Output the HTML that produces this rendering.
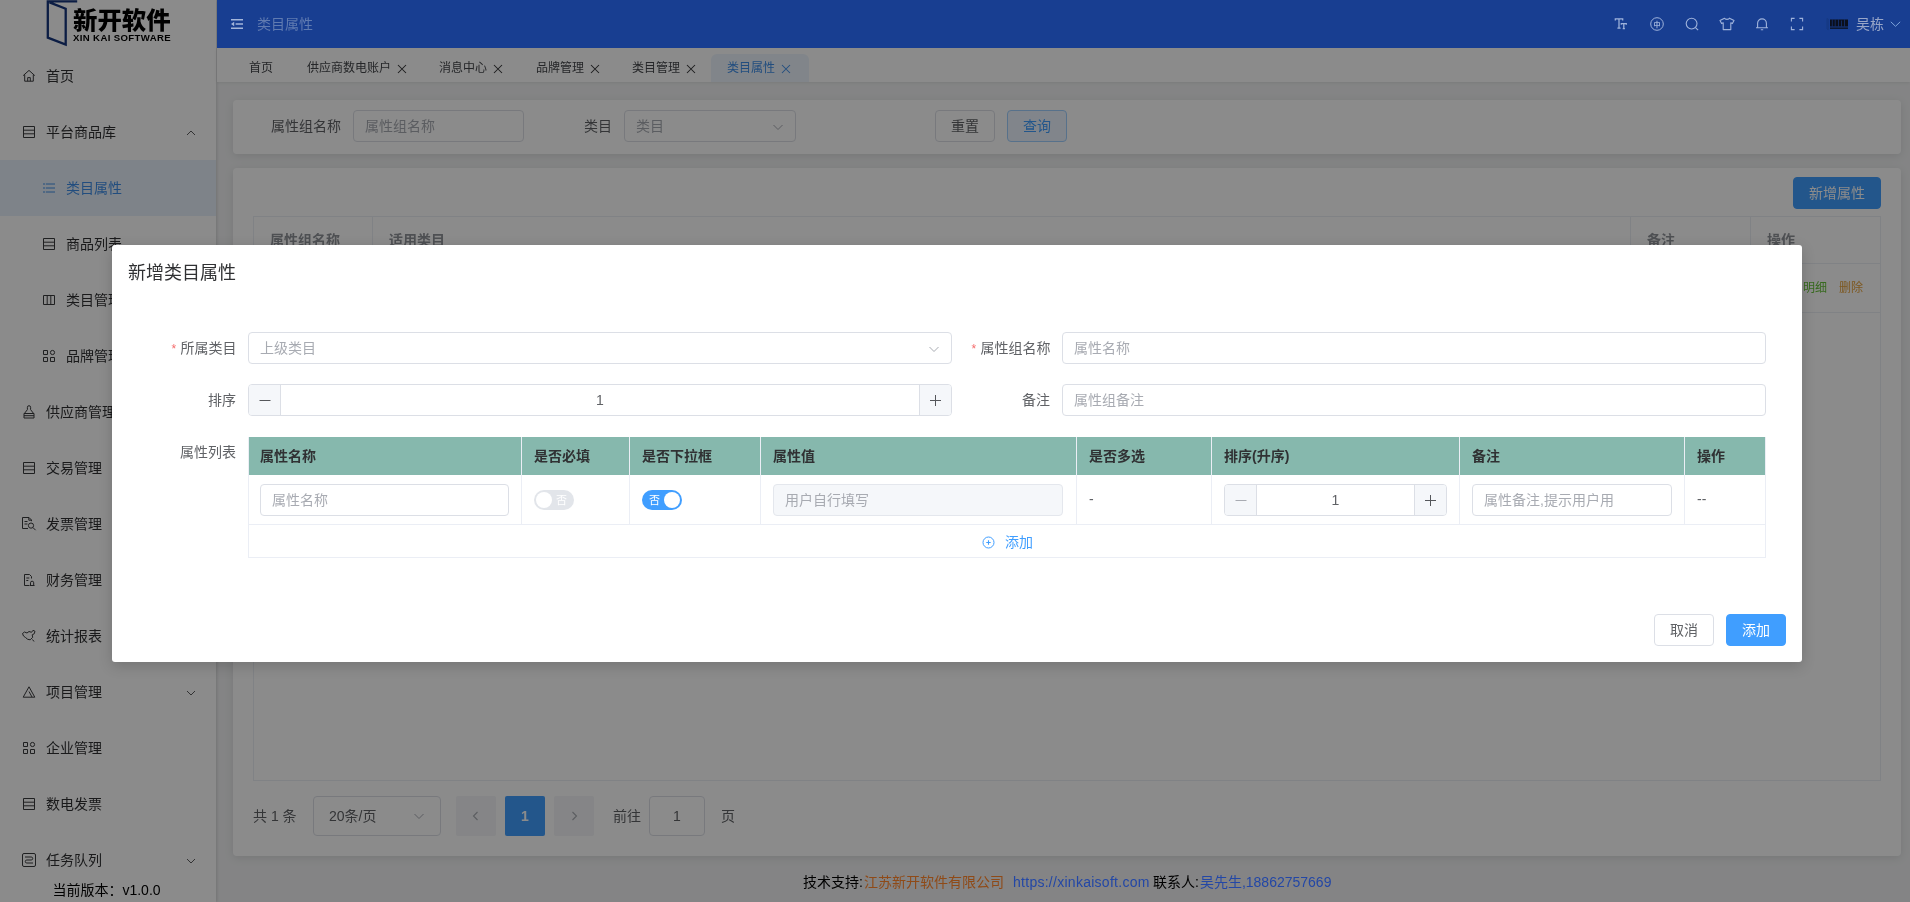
<!DOCTYPE html>
<html lang="zh-CN">
<head>
<meta charset="utf-8">
<title>类目属性</title>
<style>
*{box-sizing:border-box;margin:0;padding:0}
html,body{width:1910px;height:902px;overflow:hidden}
body{position:relative;background:#f2f3f4;font-family:"Liberation Sans","Noto Sans CJK SC",sans-serif;font-size:14px;color:#303133}
.abs{position:absolute}
svg{display:block}
#side,#hd,#tabs,.card,#ft,#md{will-change:transform}
/* ---------- sidebar ---------- */
#side{position:absolute;left:0;top:0;width:216px;height:902px;background:#fff;box-shadow:1px 0 3px rgba(0,0,0,.14)}
.mi{position:absolute;left:0;width:216px;height:56px;line-height:56px;font-size:14px;color:#303133;white-space:nowrap}
.mi .ic{position:absolute;left:22px;top:21px;width:14px;height:14px}
.mi .tx{position:absolute;left:46px;top:0}
.mi.sub .ic{left:42px}
.mi.sub .tx{left:66px}
.mi .ar{position:absolute;left:185px;top:23px;width:12px;height:12px}
.mi.act{background:#e8f1fb;color:#3f8ee8}
/* ---------- header ---------- */
#hd{position:absolute;left:217px;top:0;width:1693px;height:48px;background:#183e91;z-index:4}
#hd .ttl{position:absolute;left:40px;top:0;line-height:48px;font-size:14px;color:#607bb1}
.hic{position:absolute;top:17px;width:14px;height:14px}
/* ---------- tabs ---------- */
#tabs{position:absolute;left:217px;top:48px;width:1693px;height:34px;background:#fff;box-shadow:0 1px 3px rgba(0,0,0,.08)}
.tab{position:absolute;top:6px;height:28px;line-height:29px;font-size:12px;color:#45474b;white-space:nowrap}
.tab .x{position:absolute;top:9.500px;width:10px;height:10px}
.tab.on{background:#ecf4fd;color:#3f8ee8;border-radius:6px 6px 0 0}
/* ---------- cards ---------- */
.card{position:absolute;background:#fff;border-radius:4px;box-shadow:0 2px 10px rgba(0,0,0,.10)}
.inp{position:absolute;height:32px;border:1px solid #dcdfe6;border-radius:4px;background:#fff;font-size:14px;line-height:30px;color:#a8abb2;padding-left:11px;white-space:nowrap;overflow:hidden}
.lbl{position:absolute;height:32px;line-height:32px;font-size:14px;color:#606266;white-space:nowrap}
.btn{position:absolute;height:32px;line-height:30px;border:1px solid #dcdfe6;border-radius:4px;background:#fff;color:#606266;font-size:14px;text-align:center;white-space:nowrap}
.btn.pri{background:#409eff;border-color:#409eff;color:#fff}
.btn.pln{background:#ecf5ff;border-color:#a0cfff;color:#409eff}
/* back table */
#bt{position:absolute;left:20px;top:48px;width:1628px;height:565px;border:1px solid #ebeef5}
#bt .th{position:absolute;top:0;height:47px;line-height:47px;padding-left:16px;font-weight:bold;color:#909399;font-size:14px;border-right:1px solid #ebeef5;border-bottom:1px solid #ebeef5}
#bt .td{position:absolute;top:47px;height:49px;line-height:48px;border-bottom:1px solid #ebeef5;border-right:1px solid #ebeef5}
/* pagination */
.pg{position:absolute;top:628px;height:40px;line-height:40px;font-size:14px;color:#606266;white-space:nowrap}
/* ---------- overlay + modal ---------- */
#ov{z-index:3;position:absolute;left:0;top:0;width:1910px;height:902px;background:rgba(0,0,0,.455)}
#md{z-index:6;position:absolute;left:112px;top:245px;width:1690px;height:417px;background:#fff;border-radius:3px;box-shadow:0 4px 14px rgba(0,0,0,.17)}
#md .mt{position:absolute;left:16px;top:16px;font-size:18px;line-height:24px;color:#303133}
.num{position:absolute;height:32px;border:1px solid #dcdfe6;border-radius:4px;background:#fff;overflow:hidden}
.num .m,.num .p{position:absolute;top:0;width:32px;height:30px;background:#f5f7fa;color:#55575b}
.num .m{left:0;border-right:1px solid #dcdfe6}
.num .p{right:0;border-left:1px solid #dcdfe6}
.num .v{position:absolute;left:32px;right:32px;top:0;height:30px;line-height:30px;text-align:center;font-size:14px;color:#606266}
.num svg{position:absolute;left:10px;top:10px;width:12px;height:12px}
/* modal table */
#mtb{position:absolute;left:136px;top:192px;width:1518px;height:121px;border-bottom:1px solid #ebeef5;border-right:1px solid #ebeef5}
#mtb .h{position:absolute;top:0;height:38px;line-height:38px;background:#86b8ad;color:#303133;font-weight:bold;font-size:14px;padding-left:12px;border-right:1px solid #ebeef5;white-space:nowrap}
#mtb .c{position:absolute;top:38px;height:50px;border-right:1px solid #ebeef5;border-bottom:1px solid #ebeef5;line-height:49px;padding-left:12px;color:#606266}
.sw{position:absolute;top:15px;width:40px;height:20px;border-radius:10px}
.sw i{position:absolute;top:2px;width:16px;height:16px;border-radius:8px;background:#fff}
.sw b{position:absolute;top:0;line-height:20px;font-size:11px;color:#fff;font-weight:normal}
</style>
</head>
<body>

<!-- ================= SIDEBAR ================= -->
<div id="side">
  <!-- logo -->
  <svg class="abs" style="left:44px;top:0" width="36" height="48" viewBox="0 0 36 48"><path d="M33.200 1.300H3.800V37.600L21.700 44.600V8.700L5.500 2.400" fill="none" stroke="#16367d" stroke-width="2.300"/></svg>
  <div class="abs" style="left:73px;top:7px;font-size:24.400px;line-height:28px;font-weight:900;color:#000;white-space:nowrap;letter-spacing:0">新开软件</div>
  <div class="abs" style="left:73px;top:32px;font-size:9.600px;line-height:12px;font-weight:bold;color:#000;white-space:nowrap;letter-spacing:.36px">XIN KAI SOFTWARE</div>

  <div class="mi" style="top:48px"><svg class="ic" viewBox="0 0 14 14"><path d="M1.2 6.6L7 1.4l5.8 5.2M2.7 5.6v6.6h8.6V5.6M5.7 12.2V8.6h2.6v3.6" fill="none" stroke="#3a3b3d" stroke-width="1"/></svg><span class="tx">首页</span></div>
  <div class="mi" style="top:104px"><svg class="ic" viewBox="0 0 14 14"><path d="M1.500 1.500h11v11h-11zM1.500 5.200h11M1.500 8.800h11" fill="none" stroke="#3a3b3d" stroke-width="1"/></svg><span class="tx">平台商品库</span><svg class="ar" viewBox="0 0 12 12"><path d="M2 8l4-4 4 4" fill="none" stroke="#4a4b4d" stroke-width=".9"/></svg></div>
  <div class="mi sub act" style="top:160px"><svg class="ic" viewBox="0 0 14 14"><path d="M1 3h12M1 7h12M1 11h12" fill="none" stroke="#3f8ee8" stroke-width="1" stroke-dasharray="2 .8 20"/></svg><span class="tx">类目属性</span></div>
  <div class="mi sub" style="top:216px"><svg class="ic" viewBox="0 0 14 14"><path d="M1.500 1.500h11v11h-11zM1.500 5.200h11M1.500 8.800h11" fill="none" stroke="#3a3b3d" stroke-width="1"/></svg><span class="tx">商品列表</span></div>
  <div class="mi sub" style="top:272px"><svg class="ic" viewBox="0 0 14 14"><path d="M1.5 2.5h11v9h-11zM5.2 2.5v9M8.8 2.5v9" fill="none" stroke="#3a3b3d" stroke-width="1"/></svg><span class="tx">类目管理</span></div>
  <div class="mi sub" style="top:328px"><svg class="ic" viewBox="0 0 14 14"><path d="M1.5 1.5h4v4h-4zM1.5 8.5h4v4h-4zM8.5 8.5h4v4h-4z" fill="none" stroke="#3a3b3d" stroke-width="1"/><circle cx="10.5" cy="3.5" r="2.1" fill="none" stroke="#3a3b3d" stroke-width="1"/></svg><span class="tx">品牌管理</span></div>
  <div class="mi" style="top:384px"><svg class="ic" viewBox="0 0 14 14"><path d="M5.400 4.600V2.300a1.600 1.600 0 013.200 0v2.300l3 3.900H2.400zM2 8.500h10v4.500H2zM2 10.700h10" fill="none" stroke="#3a3b3d" stroke-width="1" stroke-linejoin="round"/></svg><span class="tx">供应商管理</span></div>
  <div class="mi" style="top:440px"><svg class="ic" viewBox="0 0 14 14"><path d="M1.500 1.500h11v11h-11zM1.500 5.200h11M1.500 8.800h11" fill="none" stroke="#3a3b3d" stroke-width="1"/></svg><span class="tx">交易管理</span></div>
  <div class="mi" style="top:496px"><svg class="ic" style="left:21px;top:20px;width:16px;height:16px" viewBox="0 0 16 16"><path d="M10.500 5.200V4L8 1.500H1.500v11H7M7.800 1.700v2.500h2.500M3.500 5.500h3M3.500 8h3" fill="none" stroke="#3a3b3d" stroke-width="1"/><circle cx="10" cy="9.600" r="2.600" fill="none" stroke="#3a3b3d" stroke-width="1"/><path d="M12 11.600l2.600 2.600" stroke="#3a3b3d" stroke-width="1"/></svg><span class="tx">发票管理</span></div>
  <div class="mi" style="top:552px"><svg class="ic" viewBox="0 0 14 14"><path d="M9.500 5.500V3.500L7.500 1.500H2.500v11h4.500M4.300 5h3M4.300 7.500h2" fill="none" stroke="#3a3b3d" stroke-width="1"/><path d="M7.500 12.500h5M8.500 12.500v-2.700a1.600 1.600 0 013.200 0v2.700" fill="none" stroke="#3a3b3d" stroke-width="1"/></svg><span class="tx">财务管理</span></div>
  <div class="mi" style="top:608px"><svg class="ic" style="left:21px;top:20px;width:16px;height:16px" viewBox="0 0 16 16"><path d="M1.500 5.500l2-1.500 2.500 1 2-1.500 2.500.8 1.500-2 2 1-.8 2.500-2 1 .5 2.500-2.500 2.500-2.500-.5L4.500 9.500 2.500 8z" fill="none" stroke="#3a3b3d" stroke-width="1" stroke-linejoin="round"/><path d="M11.500 11.500l1.500 2" stroke="#3a3b3d" stroke-width="1"/></svg><span class="tx">统计报表</span></div>
  <div class="mi" style="top:664px"><svg class="ic" viewBox="0 0 14 14"><path d="M7 1.800L12.800 12.200H1.200zM7 6.500l3 5.500" fill="none" stroke="#3a3b3d" stroke-width="1" stroke-linejoin="round"/></svg><span class="tx">项目管理</span><svg class="ar" viewBox="0 0 12 12"><path d="M2 4l4 4 4-4" fill="none" stroke="#4a4b4d" stroke-width=".9"/></svg></div>
  <div class="mi" style="top:720px"><svg class="ic" viewBox="0 0 14 14"><path d="M1.500 1.500h4v4h-4zM1.500 8.500h4v4h-4zM8.500 8.500h4v4h-4z" fill="none" stroke="#3a3b3d" stroke-width="1"/><circle cx="10.500" cy="3.500" r="2.100" fill="none" stroke="#3a3b3d" stroke-width="1"/></svg><span class="tx">企业管理</span></div>
  <div class="mi" style="top:776px"><svg class="ic" viewBox="0 0 14 14"><path d="M1.500 1.500h11v11h-11zM1.500 5.200h11M1.500 8.800h11" fill="none" stroke="#3a3b3d" stroke-width="1"/></svg><span class="tx">数电发票</span></div>
  <div class="mi" style="top:832px"><svg class="ic" style="left:21px;top:20px;width:16px;height:16px" viewBox="0 0 16 16"><rect x="1.500" y="1.500" width="13" height="13" rx="1.500" fill="none" stroke="#3a3b3d" stroke-width="1"/><path d="M4 5h6.200a1.500 1.500 0 010 3H5.800a1.500 1.500 0 000 3H12" fill="none" stroke="#3a3b3d" stroke-width="1"/></svg><span class="tx">任务队列</span><svg class="ar" viewBox="0 0 12 12"><path d="M2 4l4 4 4-4" fill="none" stroke="#4a4b4d" stroke-width=".9"/></svg></div>
  <div class="abs" style="left:0;top:878px;width:216px;height:24px;line-height:24px;background:#fff;text-align:center;font-size:14px;color:#000;padding-right:3px">当前版本：v1.0.0</div>
</div>

<!-- ================= HEADER ================= -->
<div id="hd">
  <svg class="abs" style="left:14px;top:19px" width="12" height="10" viewBox="0 0 12 10"><path d="M0 .8h12M4.600 5h7.400M0 9.200h12" stroke="#a3b5da" stroke-width="1.500" fill="none"/><path d="M0 5l3.200-2.300v4.600z" fill="#a3b5da"/></svg>
  <div class="ttl">类目属性</div>
<div style="opacity:1">
  <!-- Tt -->
  <svg class="hic" style="left:1397px" viewBox="0 0 14 14"><path d="M1.300 3.600V1.800h7.400v1.800M5 1.800v9.400M3.400 11.200h3.200M7.300 7.800V6.600h5v1.200M9.800 6.600v5M8.700 11.600h2.200" fill="none" stroke="#9fb3db" stroke-width="1.250"/></svg>
  <!-- zh circle -->
  <svg class="hic" style="left:1433px" viewBox="0 0 14 14"><circle cx="7" cy="7" r="6.300" fill="none" stroke="#9fb3db" stroke-width="1"/><text x="7" y="9.600" font-size="7" font-weight="bold" text-anchor="middle" fill="#9fb3db" font-family="Noto Sans CJK SC,sans-serif">中</text></svg>
  <!-- search -->
  <svg class="hic" style="left:1468px" viewBox="0 0 14 14"><circle cx="6.600" cy="6.600" r="5.400" fill="none" stroke="#9fb3db" stroke-width="1.100"/><path d="M10.500 10.700l2.600 2.500" stroke="#9fb3db" stroke-width="1.100"/></svg>
  <!-- shirt -->
  <svg class="hic" style="left:1502px;width:16px" viewBox="0 0 16 14"><path d="M5.500 1.200L1 3.600l1.600 3 1.600-.8v6.800h7.600V5.800l1.600.8 1.600-3-4.500-2.400c-.5 1.500-4.500 1.500-5 0z" fill="none" stroke="#9fb3db" stroke-width="1.100" stroke-linejoin="round"/></svg>
  <!-- bell -->
  <svg class="hic" style="left:1538px" viewBox="0 0 14 14"><path d="M2.600 10.800V6.300a4.400 4.400 0 018.800 0v4.500M1 10.800h12M5.800 12.800h2.400" fill="none" stroke="#9fb3db" stroke-width="1.100"/></svg>
  <!-- fullscreen -->
  <svg class="hic" style="left:1573px" viewBox="0 0 14 14"><path d="M1.400 4.600V1.400h3.200M9.400 1.400h3.200v3.200M12.600 9.400v3.200H9.400M4.600 12.600H1.400V9.400" fill="none" stroke="#9fb3db" stroke-width="1.100"/></svg>
  <!-- avatar -->
  <svg class="abs" style="left:1609px;top:17px" width="23" height="14" viewBox="0 0 23 14"><path d="M1 1.500v10.500l1.300.8V2.300z" fill="none" stroke="#16367d" stroke-width=".7"/><rect x="4" y="2.500" width="18" height="7" fill="#0b0f1c"/><path d="M6.300 2.500v7M9.200 2.500v7M12.500 2.500v7M15.500 3.500v6M18.500 2.500v7" stroke="#183e91" stroke-width=".6"/><rect x="4" y="10.500" width="18" height="1.300" fill="#0b0f1c"/></svg>
  <div class="abs" style="left:1639px;top:0;line-height:48px;font-size:14px;color:#98a6c8;white-space:nowrap">吴栋</div>
  <svg class="abs" style="left:1673px;top:19px" width="11" height="10" viewBox="0 0 11 10"><path d="M.800 2.800L5.500 7.300l4.700-4.500" fill="none" stroke="#7da3da" stroke-width="1"/></svg>
</div>
</div>

<!-- ================= TABS ================= -->
<div id="tabs"><div class="tab" style="left:16px;width:56px;padding-left:16px">首页</div><div class="tab" style="left:74px;width:134px;padding-left:16px">供应商数电账户<svg class="x" style="left:106px" viewBox="0 0 10 10"><path d="M1 1l8 8M9 1l-8 8" stroke="#303133" stroke-width="1.050" fill="none"/></svg></div><div class="tab" style="left:206px;width:98px;padding-left:16px">消息中心<svg class="x" style="left:70px" viewBox="0 0 10 10"><path d="M1 1l8 8M9 1l-8 8" stroke="#303133" stroke-width="1.050" fill="none"/></svg></div><div class="tab" style="left:303px;width:98px;padding-left:16px">品牌管理<svg class="x" style="left:70px" viewBox="0 0 10 10"><path d="M1 1l8 8M9 1l-8 8" stroke="#303133" stroke-width="1.050" fill="none"/></svg></div><div class="tab" style="left:399px;width:98px;padding-left:16px">类目管理<svg class="x" style="left:70px" viewBox="0 0 10 10"><path d="M1 1l8 8M9 1l-8 8" stroke="#303133" stroke-width="1.050" fill="none"/></svg></div><div class="tab on" style="left:494px;width:98px;padding-left:16px">类目属性<svg class="x" style="left:70px" viewBox="0 0 10 10"><path d="M1 1l8 8M9 1l-8 8" stroke="#3f8ee8" stroke-width="1.050" fill="none"/></svg></div></div>

<!-- ================= SEARCH CARD ================= -->
<div class="card" id="sc" style="left:233px;top:100px;width:1668px;height:54px">
  <div class="lbl" style="left:38px;top:10px">属性组名称</div>
  <div class="inp" style="left:120px;top:10px;width:171px">属性组名称</div>
  <div class="lbl" style="left:351px;top:10px">类目</div>
  <div class="inp" style="left:391px;top:10px;width:172px">类目<svg class="abs" style="left:147px;top:10px" width="12" height="12" viewBox="0 0 12 12"><path d="M1.500 4l4.500 4.500L10.500 4" fill="none" stroke="#a8abb2" stroke-width="1"/></svg></div>
  <div class="btn" style="left:702px;top:10px;width:60px">重置</div>
  <div class="btn pln" style="left:774px;top:10px;width:60px">查询</div>
</div>

<!-- ================= MAIN CARD ================= -->
<div class="card" id="mc" style="left:233px;top:168px;width:1668px;height:688px">
  <div class="btn pri" style="left:1560px;top:9px;width:88px">新增属性</div>
  <div id="bt">
    <div class="th" style="left:0;width:119px">属性组名称</div>
    <div class="th" style="left:119px;width:1258px">适用类目</div>
    <div class="th" style="left:1377px;width:120px">备注</div>
    <div class="th" style="left:1497px;width:129px;border-right:0">操作</div>
    <div class="td" style="left:0;width:119px"></div>
    <div class="td" style="left:119px;width:1258px"></div>
    <div class="td" style="left:1377px;width:120px"></div>
    <div class="td" style="left:1497px;width:129px;border-right:0;font-size:12px;white-space:nowrap"><span style="position:absolute;left:16px;color:#409eff">编辑</span><span style="position:absolute;left:52px;color:#67c23a">明细</span><span style="position:absolute;left:88px;color:#e6a23c">删除</span></div>
  </div>
  <div class="pg" style="left:20px">共 1 条</div>
  <div class="inp" style="left:80px;top:628px;width:128px;height:40px;line-height:38px;color:#606266;padding-left:15px">20条/页<svg class="abs" style="left:99px;top:13px" width="12" height="12" viewBox="0 0 12 12"><path d="M1.500 4l4.500 4.500L10.500 4" fill="none" stroke="#a8abb2" stroke-width="1"/></svg></div>
  <div class="abs" style="left:223px;top:628px;width:40px;height:40px;background:#f4f5f7;border-radius:2px"><svg class="abs" style="left:14px;top:14px" width="12" height="12" viewBox="0 0 12 12"><path d="M7.500 2L3.500 6l4 4" fill="none" stroke="#a8abb2" stroke-width="1.100"/></svg></div>
  <div class="abs" style="left:272px;top:628px;width:40px;height:40px;background:#409eff;border-radius:2px;color:#fff;text-align:center;line-height:40px;font-weight:bold;font-size:14px">1</div>
  <div class="abs" style="left:321px;top:628px;width:40px;height:40px;background:#f4f5f7;border-radius:2px"><svg class="abs" style="left:14px;top:14px" width="12" height="12" viewBox="0 0 12 12"><path d="M4.500 2l4 4-4 4" fill="none" stroke="#a8abb2" stroke-width="1.100"/></svg></div>
  <div class="pg" style="left:380px">前往</div>
  <div class="inp" style="left:416px;top:628px;width:56px;height:40px;line-height:38px;color:#606266;padding-left:0;text-align:center">1</div>
  <div class="pg" style="left:488px">页</div>
</div>

<!-- ================= FOOTER ================= -->
<div class="abs" id="ft" style="z-index:5;left:217px;top:870px;width:1693px;height:24px;line-height:24px;font-size:14px;white-space:nowrap"><span style="position:absolute;left:586px;color:#000">技术支持:<span style="color:#8f4a17;margin-left:1px">江苏新开软件有限公司</span></span><span style="position:absolute;left:796px;color:#2347a6;letter-spacing:.27px">https://xinkaisoft.com</span><span style="position:absolute;left:936px;color:#000">联系人:<span style="color:#2347a6;margin-left:1px">吴先生,18862757669</span></span></div>

<div id="ov"></div>

<!-- ================= MODAL ================= -->
<div id="md">
  <div class="mt">新增类目属性</div>
  <div class="lbl" style="left:59.500px;top:87px;color:#f56c6c;font-size:12px;line-height:34px">*</div><div class="lbl" style="left:68.500px;top:87px">所属类目</div>
  <div class="inp" style="left:136px;top:87px;width:704px">上级类目<svg class="abs" style="left:679px;top:10px" width="12" height="12" viewBox="0 0 12 12"><path d="M1.500 4l4.500 4.500L10.500 4" fill="none" stroke="#a8abb2" stroke-width="1"/></svg></div>
  <div class="lbl" style="left:859.500px;top:87px;color:#f56c6c;font-size:12px;line-height:34px">*</div><div class="lbl" style="left:868.500px;top:87px">属性组名称</div>
  <div class="inp" style="left:950px;top:87px;width:704px">属性名称</div>
  <div class="lbl" style="left:96px;top:139px">排序</div>
  <div class="num" style="left:136px;top:139px;width:704px"><div class="m"><svg viewBox="0 0 12 12"><path d="M.500 5.500h11" stroke="currentColor" stroke-width="1" fill="none"/></svg></div><div class="v">1</div><div class="p"><svg viewBox="0 0 12 12"><path d="M0 5.500h11M5.500 0v11" stroke="currentColor" stroke-width="1" fill="none"/></svg></div></div>
  <div class="lbl" style="left:910px;top:139px">备注</div>
  <div class="inp" style="left:950px;top:139px;width:704px">属性组备注</div>
  <div class="lbl" style="left:68px;top:191px">属性列表</div>
  <div id="mtb"><div class="h" style="left:0px;width:274px">属性名称</div><div class="h" style="left:274px;width:108px">是否必填</div><div class="h" style="left:382px;width:131px">是否下拉框</div><div class="h" style="left:513px;width:316px">属性值</div><div class="h" style="left:829px;width:135px">是否多选</div><div class="h" style="left:964px;width:248px">排序(升序)</div><div class="h" style="left:1212px;width:225px">备注</div><div class="h" style="left:1437px;width:81px">操作</div><div class="c" style="left:0px;width:274px"><div class="inp" style="left:12px;top:9px;width:249px">属性名称</div></div><div class="c" style="left:274px;width:108px"><div class="sw" style="left:12px;background:#e2e5ea"><i style="left:2px"></i><b style="left:22px">否</b></div></div><div class="c" style="left:382px;width:131px"><div class="sw" style="left:12px;background:#409eff"><i style="right:2px"></i><b style="left:7px">否</b></div></div><div class="c" style="left:513px;width:316px"><div class="inp" style="left:12px;top:9px;width:290px;background:#f5f7fa;border-color:#e4e7ed">用户自行填写</div></div><div class="c" style="left:829px;width:135px">-</div><div class="c" style="left:964px;width:248px"><div class="num" style="left:12px;top:9px;width:223px"><div class="m" style="color:#a8abb2"><svg viewBox="0 0 12 12"><path d="M.500 5.500h11" stroke="currentColor" stroke-width="1" fill="none"/></svg></div><div class="v">1</div><div class="p"><svg viewBox="0 0 12 12"><path d="M0 5.500h11M5.500 0v11" stroke="currentColor" stroke-width="1" fill="none"/></svg></div></div></div><div class="c" style="left:1212px;width:225px"><div class="inp" style="left:12px;top:9px;width:200px">属性备注,提示用户用</div></div><div class="c" style="left:1437px;width:81px">--</div><div class="abs" style="left:0;top:88px;width:1518px;height:32px;line-height:34px;color:#409eff;font-size:14px"><svg class="abs" style="left:733.500px;top:10.500px" width="13" height="13" viewBox="0 0 13 13"><circle cx="6.500" cy="6.500" r="5.500" fill="none" stroke="#409eff" stroke-width="1"/><path d="M4.300 6.500h4.400M6.500 4.300v4.400" stroke="#409eff" stroke-width="1.100"/></svg><span style="position:absolute;left:757px">添加</span></div><div class="abs" style="left:0;top:0;width:1px;height:120px;background:#ebeef5"></div></div>
  <div class="btn" style="left:1542px;top:369px;width:60px">取消</div>
  <div class="btn pri" style="left:1614px;top:369px;width:60px">添加</div>
</div>

</body>
</html>
